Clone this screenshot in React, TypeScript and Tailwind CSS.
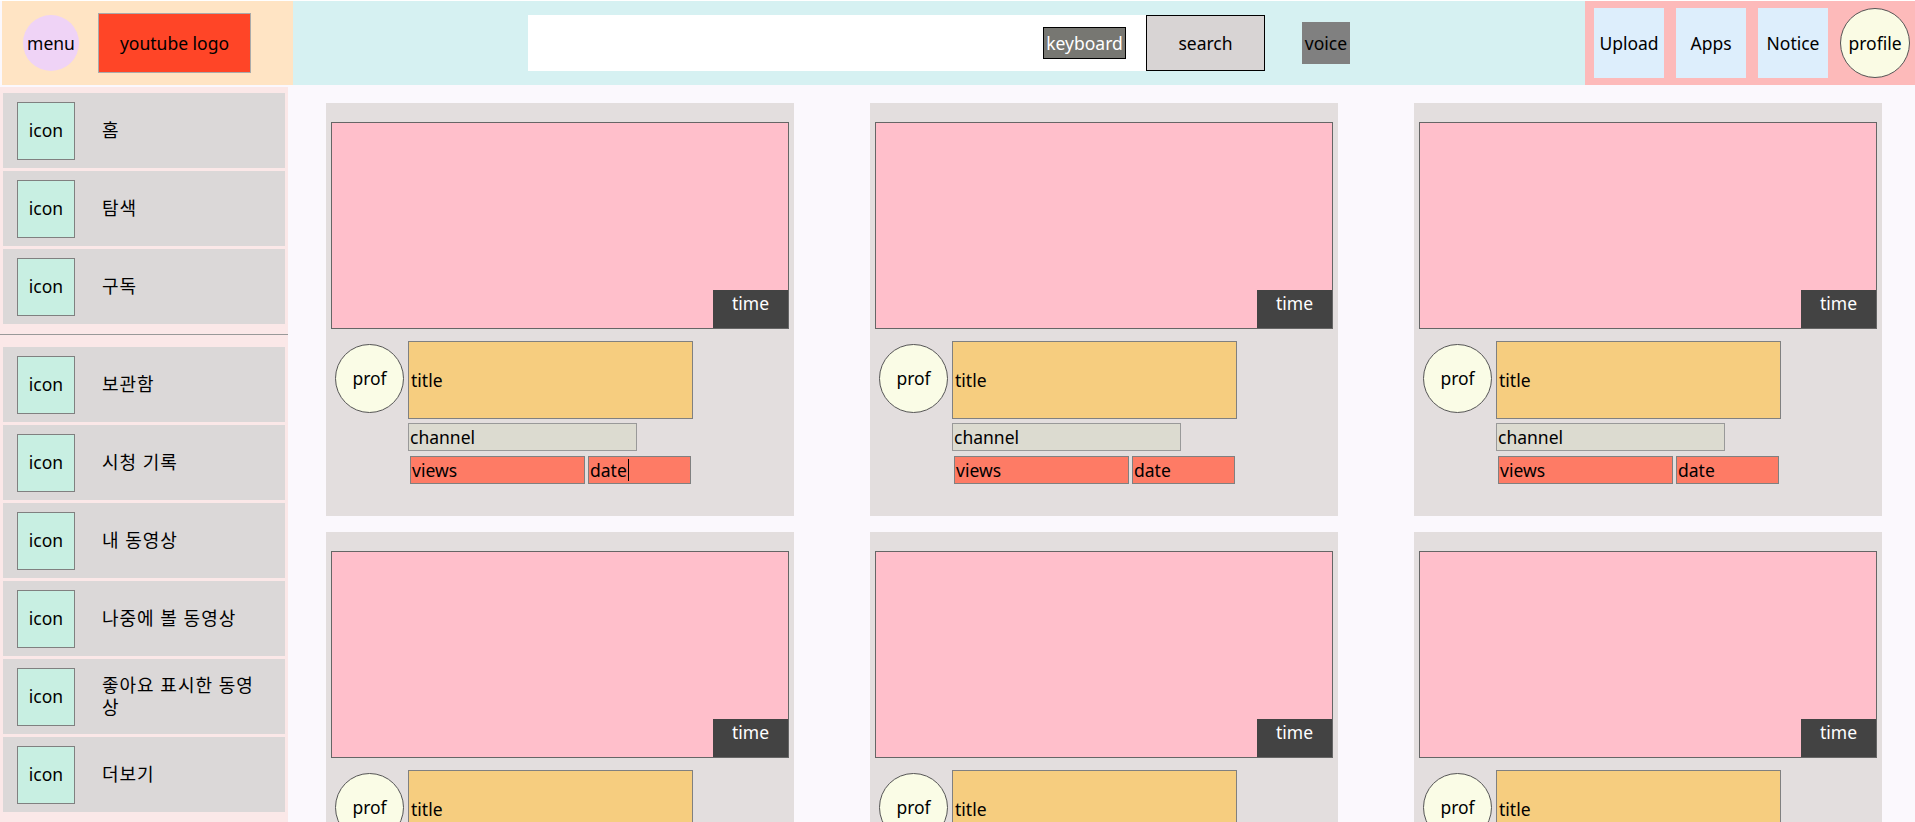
const menuTop = ["홈", "탐색", "구독"];
const menuBottom = ["보관함", "시청 기록", "내 동영상", "나중에 볼 동영상", "좋아요 표시한 동영상", "더보기"];

function SideItem({ label }: { label: string }) {
  return (
    <div className="flex h-[75px] items-center bg-[#dbd8d8]">
      <div className="ml-[14px] flex h-[58px] w-[58px] shrink-0 items-center justify-center border border-[#808080] bg-[#c8efe2]">
        icon
      </div>
      <div className="ml-[27px] w-[168px] text-[18px] leading-[1.2] tracking-[1px]">{label}</div>
    </div>
  );
}

function VideoCard({ caret }: { caret?: boolean }) {
  return (
    <div className="h-[413px] w-[468px] bg-[#e3dede] px-[5px] pt-[19px]">
      <div className="relative h-[207px] border border-[#666] bg-[#ffbfcb]">
        <div className="absolute bottom-0 right-0 h-[38px] w-[75px] bg-[#434343] text-center text-white">time</div>
      </div>
      <div className="mt-[12px] flex">
        <div className="ml-[4px] mt-[3px] flex h-[69px] w-[69px] shrink-0 items-center justify-center rounded-full border border-[#555] bg-[#fafce6]">
          prof
        </div>
        <div className="ml-[4px] flex flex-col">
          <div className="flex h-[78px] w-[285px] items-center border border-[#808080] bg-[#f6cd7f] pl-[2px]">title</div>
          <div className="mt-[4px] flex h-[28px] w-[229px] items-center border border-[#999] bg-[#dcdbd0] pl-[1px]">channel</div>
          <div className="ml-[2px] mt-[5px] flex gap-[3px]">
            <div className="flex h-[28px] w-[175px] items-center border border-[#808080] bg-[#fe7b65] pl-[1px]">views</div>
            <div className="flex h-[28px] w-[103px] items-center border border-[#808080] bg-[#fe7b65] pl-[1px]">
              date
              {caret && <span className="ml-px h-[22px] w-px bg-black" />}
            </div>
          </div>
        </div>
      </div>
    </div>
  );
}

export default function App() {
  return (
    <div className="min-h-screen bg-[#fbf8fd] font-['Noto_Sans','Noto_Sans_CJK_KR',sans-serif] text-[17.5px] text-black">
      {/* Header */}
      <header className="ml-[2px] mt-[1px] flex h-[84px]">
        <div className="flex w-[291px] items-center bg-[#ffe4c4]">
          <div className="ml-[21px] flex h-[56px] w-[56px] items-center justify-center rounded-full bg-[#efd3f6]">menu</div>
          <div className="ml-[19px] flex h-[60px] w-[153px] items-center justify-center border border-[#aaa] bg-[#ff4527]">
            youtube logo
          </div>
        </div>

        <div className="flex flex-1 items-center justify-center bg-[#d6f1f2]">
          <div className="flex h-[56px] w-[618px] items-center justify-end bg-white pr-[20px]">
            <div className="flex h-[32px] w-[83px] items-center justify-center border border-black bg-[#777772] text-white">
              keyboard
            </div>
          </div>
          <button className="h-[56px] w-[119px] border border-black bg-[#d8d4d4]">search</button>
          <div className="ml-[37px] flex h-[42px] w-[48px] items-center justify-center bg-[#808080]">voice</div>
        </div>

        <div className="flex w-[330px] items-center gap-[12px] bg-[#fdbaba] pl-[9px]">
          <div className="flex h-[70px] w-[70px] items-center justify-center bg-[#ddeefc]">Upload</div>
          <div className="flex h-[70px] w-[70px] items-center justify-center bg-[#ddeefc]">Apps</div>
          <div className="flex h-[70px] w-[70px] items-center justify-center bg-[#ddeefc]">Notice</div>
          <div className="flex h-[70px] w-[70px] items-center justify-center rounded-full border border-[#555] bg-[#fafbe4]">
            profile
          </div>
        </div>
      </header>

      <div className="mt-[2px] flex">
        {/* Sidebar */}
        <aside className="w-[288px] shrink-0 bg-[#fbe8e8] px-[3px] pt-[6px]">
          <div className="flex flex-col gap-[3px]">
            {menuTop.map((m) => (
              <SideItem key={m} label={m} />
            ))}
          </div>
          <div className="-mx-[3px] mb-[12px] mt-[10px] border-t border-[#999]" />
          <div className="flex flex-col gap-[3px]">
            {menuBottom.map((m) => (
              <SideItem key={m} label={m} />
            ))}
          </div>
        </aside>

        {/* Videos */}
        <main className="flex-1 pl-[38px] pt-[16px]">
          <div className="grid grid-cols-[repeat(3,468px)] gap-x-[76px] gap-y-[16px]">
            {Array.from({ length: 6 }).map((_, i) => (
              <VideoCard key={i} caret={i === 0} />
            ))}
          </div>
        </main>
      </div>
    </div>
  );
}
